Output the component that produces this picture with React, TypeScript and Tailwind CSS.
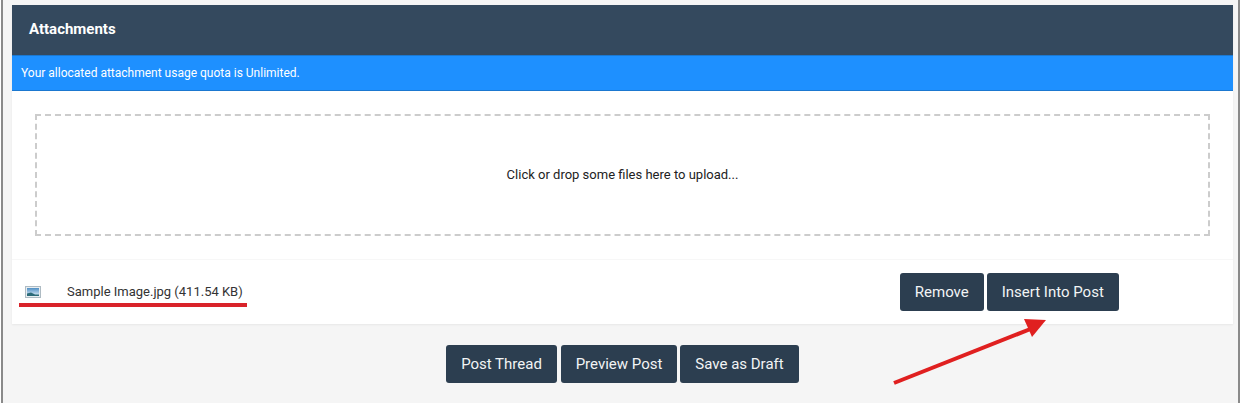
const BTN =
  'h-[38px] rounded-[3px] bg-[#2c3e50] text-[15px] leading-none text-[#f2f4f5] flex items-center justify-center';

function FileIcon() {
  return (
    <svg width="16" height="12" viewBox="0 0 16 12" className="block">
      <defs>
        <linearGradient id="sky" x1="0" y1="0" x2="0" y2="1">
          <stop offset="0" stopColor="#4f8fc4" />
          <stop offset="1" stopColor="#e3f0f8" />
        </linearGradient>
      </defs>
      <rect x="0.5" y="0.5" width="15" height="11" fill="#e8edf0" stroke="#aebbc3" />
      <rect x="2" y="2" width="12" height="8" fill="url(#sky)" />
      <path d="M2 7.5 L6 6.5 L10 8.5 L14 8.5 L14 10 L2 10 Z" fill="#2b6a78" />
    </svg>
  );
}

export default function App() {
  return (
    <div className="relative h-[403px] w-[1243px] overflow-hidden bg-white font-['Roboto',sans-serif]">
      <div className="ml-px mr-[3px] h-full border-x-2 border-x-[#8a8a8a] bg-[#f5f5f5] pl-[9px] pr-[5px] pt-[5px]">
        <div className="w-[1221px] bg-white shadow-[0_1px_2px_rgba(0,0,0,0.06)]">
          <div className="flex h-[50px] items-center bg-[#34495e] pb-[2px] pl-[17px] text-[15px] font-bold text-white">
            Attachments
          </div>
          <div className="flex h-[36px] items-center border-y border-y-[#1b78d0] bg-[#1e90ff] pl-[9px] text-[12px] text-white">
            Your allocated attachment usage quota is Unlimited.
          </div>
          <div className="px-[23px] pb-[23px] pt-[23px]">
            <div className="flex h-[122px] items-center justify-center border-2 border-dashed border-[#cccccc] text-[13px] text-[#222222]">
              Click or drop some files here to upload...
            </div>
          </div>
          <div className="flex h-[65px] items-center border-t border-t-[#f7f7f7] pl-[13px]">
            <FileIcon />
            <span className="ml-[26px] text-[13px] text-[#333333]">Sample Image.jpg (411.54 KB)</span>
            <div className="ml-[657px] flex gap-[3px]">
              <button className={`${BTN} w-[84px]`}>Remove</button>
              <button className={`${BTN} w-[132px]`}>Insert Into Post</button>
            </div>
          </div>
        </div>
        <div className="mt-[21px] flex w-[1221px] justify-center">
          <button className={`${BTN} w-[111px]`}>Post Thread</button>
          <button className={`${BTN} ml-[4px] w-[116px]`}>Preview Post</button>
          <button className={`${BTN} ml-[3px] w-[119px]`}>Save as Draft</button>
        </div>
      </div>

      {/* red annotations drawn over the screenshot */}
      <div className="absolute left-[19px] top-[303px] h-[4px] w-[228px] bg-[#d9232a]" />
      <svg className="absolute left-0 top-0" width="1243" height="403" viewBox="0 0 1243 403">
        <path d="M894 383 L1033 328" stroke="#e02020" strokeWidth="4" fill="none" />
        <path d="M1024 319 L1046 320 L1032 337 Z" fill="#e02020" />
      </svg>
    </div>
  );
}
